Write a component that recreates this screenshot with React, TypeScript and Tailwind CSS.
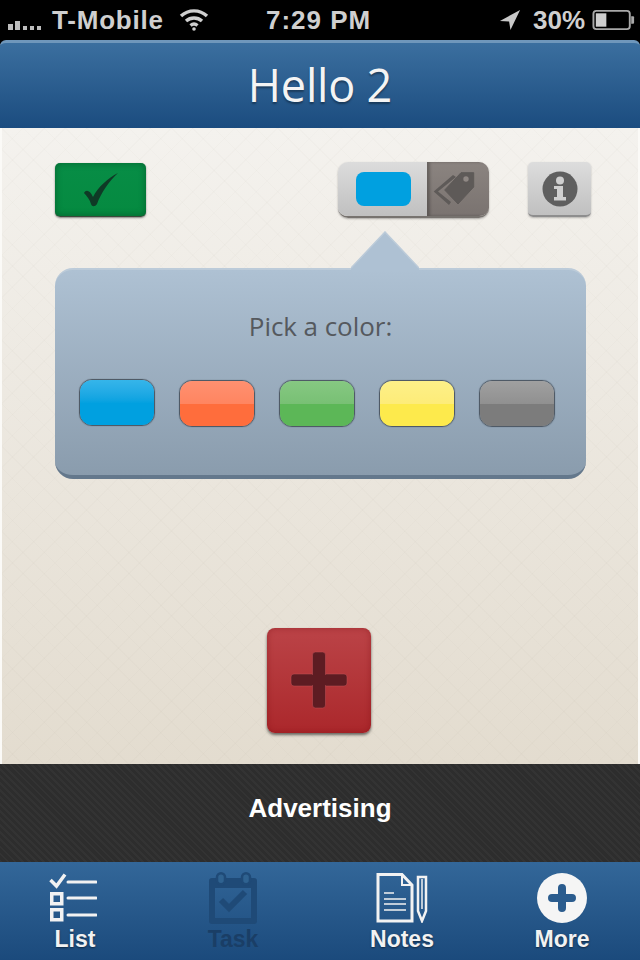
import React from "react";

const sans = "font-['Liberation_Sans',Arial,sans-serif]";

const swatches = [
  { top: "from-[#35b5ea] to-[#02a1e0]", bottom: "bg-[#00a0e0]", lift: "-mt-px" },
  { top: "from-[#ff9070] to-[#ff8560]", bottom: "bg-[#ff6d3c]", lift: "" },
  { top: "from-[#86c882] to-[#78c074]", bottom: "bg-[#5cb757]", lift: "" },
  { top: "from-[#fdf088] to-[#fdec78]", bottom: "bg-[#fdea4c]", lift: "" },
  { top: "from-[#a0a0a0] to-[#909090]", bottom: "bg-[#7c7c7c]", lift: "" },
];

const StatusBar = () => (
  <div className={`${sans} flex h-[40px] items-center bg-black text-[26px] font-bold leading-none text-[#cfcfcf]`}>
    <svg width="40" height="14" viewBox="0 0 40 14" className="ml-[6px] mt-[6px] shrink-0" fill="#bdbdbd">
      <rect x="2" y="8" width="5" height="6" />
      <rect x="9" y="5" width="5" height="9" />
      <rect x="17" y="10" width="4" height="4" />
      <rect x="24" y="10" width="4" height="4" />
      <rect x="31" y="10" width="4" height="4" />
    </svg>
    <span className="ml-[6px] w-[110px] shrink-0 whitespace-nowrap tracking-[0.8px]">T-Mobile</span>
    <svg width="30" height="24" viewBox="0 0 30 24" className="ml-[17px] shrink-0" fill="none" stroke="#cfcfcf" strokeWidth="3.4">
      <path d="M2 8 A19 19 0 0 1 28 8" />
      <path d="M7 13 A12 12 0 0 1 23 13" />
      <path d="M11.5 17.5 A5.5 5.5 0 0 1 18.5 17.5" />
      <circle cx="15" cy="21" r="1.8" fill="#cfcfcf" stroke="none" />
    </svg>
    <span className="ml-[57px] w-[106px] shrink-0 whitespace-nowrap tracking-[1px]">7:29 PM</span>
    <svg width="22" height="24" viewBox="0 0 24 24" className="ml-[127px] shrink-0" fill="#c8c8c8">
      <path d="M23 1 L1 13 L11 13.5 L12.5 23 Z" />
    </svg>
    <span className="ml-[12px] w-[57px] shrink-0 whitespace-nowrap">30%</span>
    <svg width="44" height="24" viewBox="0 0 46 24" className="ml-[2px] shrink-0" fill="none">
      <rect x="1.5" y="2.5" width="38" height="19" rx="3" stroke="#a8a8a8" strokeWidth="2" />
      <rect x="4" y="5" width="11" height="14" fill="#cfcfcf" />
      <path d="M41 8 h2 a1 1 0 0 1 1 1 v6 a1 1 0 0 1 -1 1 h-2 z" fill="#a8a8a8" />
    </svg>
  </div>
);

const Header = () => (
  <div className="flex h-[88px] items-center justify-center rounded-t-[6px] border-t-[3px] border-[#6f97bb] bg-gradient-to-b from-[#3b6f9f] to-[#1b4c7f]">
    <h1 className="mt-[-3px] font-['Open_Sans',sans-serif] text-[45px] font-normal leading-none tracking-[-0.2px] text-[#f4f4f4] [text-shadow:0_2px_2px_rgba(0,0,0,0.35)]">
      Hello 2
    </h1>
  </div>
);

const TopRow = () => (
  <div className="ml-[55px] flex items-start">
    <button className="flex h-[54px] w-[91px] items-center justify-center rounded-[5px] border-b border-[#3a4a3a] bg-gradient-to-b from-[#078d46] to-[#058a40] shadow-[0_1px_2px_rgba(0,0,0,0.45),inset_0_0_7px_rgba(0,50,20,0.45)]">
      <svg width="34" height="34" viewBox="0 0 34 34" fill="#0f3a26">
        <path d="M0 20 C2 16 6 17 9 24 C14 14 24 5 34 0 C25 8 17 20 13 31 C11 34 8 34 7 31 C6 27 3 23 0 20 Z" />
      </svg>
    </button>
    <div className="ml-[192px] mt-[-1px] flex h-[56px] w-[151px] overflow-hidden rounded-[10px] border-b-2 border-[#77736f] shadow-[0_1px_2px_rgba(0,0,0,0.3)]">
      <div className="flex w-[89px] items-center justify-center bg-gradient-to-b from-[#dcdcdc] to-[#c0c0c0]">
        <div className="ml-[1px] h-[34px] w-[55px] rounded-[8px] bg-[#00a0e0]" />
      </div>
      <div className="flex flex-1 items-center justify-center bg-gradient-to-b from-[#8b8480] to-[#7a7370] shadow-[inset_3px_0_3px_rgba(0,0,0,0.25)]">
        <svg width="42" height="34" viewBox="0 0 42 34" className="mr-[8px]">
          <path d="M20 3 L0.7 19.5 L16 33 L18 30 L5 19.5 L23 5 Z" fill="#5e5a58" />
          <path d="M28 0.7 H40.7 V15 L25 32 L11.7 18 Z" fill="#5e5a58" stroke="#5e5a58" strokeLinejoin="round" />
          <circle cx="33" cy="7" r="2.7" fill="#8f8884" />
        </svg>
      </div>
    </div>
    <button className="ml-[39px] mt-[-1px] flex h-[55px] w-[63px] items-center justify-center rounded-[5px] border-b-2 border-[#8e8e8e] bg-gradient-to-b from-[#dddddd] to-[#c0c0c0] shadow-[0_1px_2px_rgba(0,0,0,0.25)]">
      <svg width="36" height="36" viewBox="0 0 36 36">
        <circle cx="18" cy="18" r="17.5" fill="#5f5f5f" />
        <circle cx="18" cy="9.5" r="4" fill="#cfcfcf" />
        <path d="M12 15 h9 v11 h3 v3.5 h-12 v-3.5 h3 v-8 h-3 z" fill="#cfcfcf" />
      </svg>
    </button>
  </div>
);

const ColorPopover = () => (
  <div className="relative ml-[55px] mr-[54px] mt-[50px] h-[211px] rounded-[18px] border-t-2 border-b-4 border-t-[#bccbd9] border-b-[#64788c] bg-gradient-to-b from-[#aec1d3] to-[#8a9cad]">
    <svg width="68" height="40" viewBox="0 0 68 40" className="absolute left-[296px] top-[-39px]">
      <path d="M0 37 L34 1 L68 37 V40 H0 Z" fill="#aec1d3" />
      <path d="M0 37 L34 1 L68 37" fill="none" stroke="#bccbd9" strokeWidth="1.5" />
    </svg>
    <p className="mt-[38px] text-center font-['Open_Sans',sans-serif] text-[26px] leading-[36px] tracking-[-0.05px] text-[#55595e]">
      Pick a color:
    </p>
    <div className="mt-[36px] flex gap-[24px] pl-[24px]">
      {swatches.map((s, i) => (
        <div
          key={i}
          className={`flex h-[47px] w-[76px] flex-col overflow-hidden rounded-[13px] border border-[#4f5a66] shadow-[0_0_1px_#4f5a66] ${s.lift}`}
        >
          <div className={`h-[23px] bg-gradient-to-b ${s.top}`} />
          <div className={`flex-1 ${s.bottom}`} />
        </div>
      ))}
    </div>
  </div>
);

const TabItem = ({ label, dark, width, children }: { label: string; dark?: boolean; width: string; children: React.ReactNode }) => (
  <div className={`flex flex-col items-center ${width}`}>
    <div className="flex h-[52px] items-center justify-center">{children}</div>
    <span
      className={`${sans} mt-[3px] text-[23px] font-bold leading-[24px] ${
        dark ? "text-[#1a3e66]" : "text-[#f2f2f2] [text-shadow:0_1px_2px_rgba(0,0,0,0.5)]"
      }`}
    >
      {label}
    </span>
  </div>
);

const TabBar = () => (
  <div className="flex h-[98px] items-start bg-gradient-to-b from-[#336799] to-[#1b4a7c] pt-[10px]">
    <div className="ml-[-5px] flex">
      <TabItem label="List" width="w-[160px]">
        <svg width="48" height="50" viewBox="0 0 48 50" fill="none" stroke="#f2f2f2" className="mr-[5px]">
          <path d="M1.5 7 L7.5 13 L16 1.5" strokeWidth="3.5" />
          <path d="M19 9 H47 M19 25 H47 M19 42 H47" strokeWidth="3" strokeLinecap="round" />
          <rect x="2.75" y="20.75" width="10" height="10" strokeWidth="3.5" />
          <rect x="2.75" y="36.75" width="10" height="10" strokeWidth="3.5" />
        </svg>
      </TabItem>
      <TabItem label="Task" dark width="w-[156px]">
        <svg width="48" height="52" viewBox="0 0 48 52" fill="none">
          <path d="M3 6 H45 a3 3 0 0 1 3 3 V49 a3 3 0 0 1 -3 3 H3 a3 3 0 0 1 -3 -3 V9 a3 3 0 0 1 3 -3 Z M6 16 V46 H42 V16 Z" fill="#1f4a77" fillRule="evenodd" />
          <rect x="8" y="1.25" width="8" height="11" rx="4" fill="#2f6290" stroke="#1f4a77" strokeWidth="2.5" />
          <rect x="33" y="1.25" width="8" height="11" rx="4" fill="#2f6290" stroke="#1f4a77" strokeWidth="2.5" />
          <path d="M12 28 L20 36 L36 20" stroke="#1f4a77" strokeWidth="6" />
        </svg>
      </TabItem>
      <TabItem label="Notes" width="w-[182px]">
        <svg width="52" height="50" viewBox="0 0 52 50" fill="none" stroke="#f2f2f2">
          <path d="M2 1.5 H26 L36 12 V48 H2 Z" strokeWidth="3" />
          <path d="M26 2 V12 H36" strokeWidth="2" />
          <path d="M8 20 H18" strokeWidth="1.5" />
          <path d="M8 26 H30 M8 31 H30 M8 37 H30" strokeWidth="1.5" />
          <path d="M42 4 H50 V38 L46 48 L42 38 Z" strokeWidth="2.5" />
          <path d="M46 6 V36" strokeWidth="1.5" />
        </svg>
      </TabItem>
      <TabItem label="More" width="w-[138px]">
        <svg width="50" height="50" viewBox="0 0 50 50">
          <circle cx="25" cy="25" r="25" fill="#f5f5f5" />
          <path d="M25 15 V35 M15 25 H35" stroke="#2b5c8e" strokeWidth="8" strokeLinecap="round" />
        </svg>
      </TabItem>
    </div>
  </div>
);

const App = () => {
  return (
    <div className="flex h-[960px] w-[640px] flex-col overflow-hidden bg-black">
      <StatusBar />
      <Header />
      <main className="flex h-[636px] flex-col border-x-2 border-[#fbfaf7] bg-[repeating-linear-gradient(45deg,transparent_0_14px,rgba(120,110,90,0.025)_14px_15px),repeating-linear-gradient(-45deg,transparent_0_14px,rgba(120,110,90,0.025)_14px_15px),linear-gradient(to_bottom,#f4f2ee,#e3dccf)] pt-[35px]">
        <div className="ml-[-2px] mr-[-2px]">
          <TopRow />
          <ColorPopover />
        </div>
        <button className="ml-[265px] mt-[149px] flex h-[105px] w-[104px] items-center justify-center rounded-[8px] bg-gradient-to-b from-[#bb4347] to-[#ab272b] shadow-[0_2px_3px_rgba(0,0,0,0.55),inset_0_0_6px_rgba(120,10,15,0.4)]">
          <svg width="58" height="58" viewBox="0 0 58 58" className="mt-[-2px]">
            <rect x="1" y="23" width="56" height="12" rx="3" fill="#5d1c22" stroke="#c05055" strokeOpacity="0.5" />
            <rect x="22.5" y="1" width="13" height="56" rx="3" fill="#5d1c22" stroke="#c05055" strokeOpacity="0.5" />
            <rect x="2" y="24" width="54" height="10" rx="2" fill="#5d1c22" />
          </svg>
        </button>
      </main>
      <div className={`${sans} flex h-[98px] items-center justify-center bg-[repeating-linear-gradient(45deg,#333333_0_2px,#2d2d2d_2px_5px)] pb-[10px] text-[26px] font-bold text-white`}>
        Advertising
      </div>
      <TabBar />
    </div>
  );
};

export default App;
